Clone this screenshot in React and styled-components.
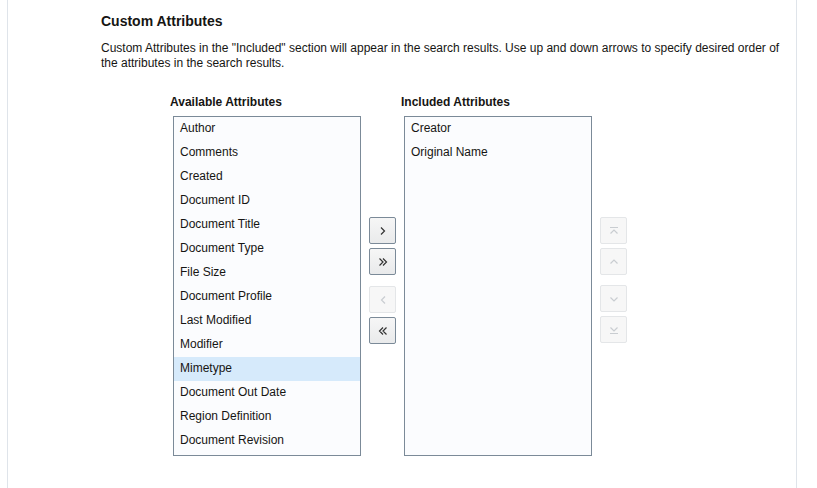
import React from "react";
import styled, { createGlobalStyle } from "styled-components";

const Global = createGlobalStyle`
  body { margin: 0; background: #fff; font-family: "Liberation Sans", Arial, sans-serif; color: #161513; }
`;

const Panel = styled.div`
  margin: 0 20px 0 7px;
  height: 488px;
  box-sizing: border-box;
  border-left: 1px solid #dfe4ea;
  border-right: 1px solid #dfe4ea;
  padding: 13px 0 0 93px;
`;

const Heading = styled.h2`
  margin: 0;
  font-size: 14px;
  font-weight: bold;
  line-height: 17px;
`;

const Desc = styled.p`
  margin: 11px 0 0;
  font-size: 12px;
  line-height: 15px;
  width: 690px;
`;

const Shuttle = styled.div`
  display: flex;
  margin: 24px 0 0 72px;
  align-items: flex-start;
`;

const Column = styled.div`
  display: flex;
  flex-direction: column;
`;

const Label = styled.div`
  font-size: 12px;
  font-weight: bold;
  height: 14px;
  margin: 0 0 7px -3px;
`;

const List = styled.div`
  width: 188px;
  height: 340px;
  box-sizing: border-box;
  border: 1px solid #7b8a98;
  background: #fbfcfe;
`;

const Item = styled.div`
  height: 24px;
  line-height: 22px;
  font-size: 12px;
  padding-left: 6px;
  background: ${(p) => (p.$sel ? "#d6eafb" : "transparent")};
`;

const Buttons = styled.div`
  display: flex;
  flex-direction: column;
  gap: 4px;
  margin: ${(p) => p.$top}px 8px 0;
`;

const Btn = styled.div`
  width: 27px;
  height: 27px;
  box-sizing: border-box;
  border: 1px solid ${(p) => (p.$off ? "#e4e6e8" : "#7b8a98")};
  border-radius: 2px;
  background: ${(p) => (p.$off ? "#f7f7f7" : "linear-gradient(#f6f6f6, #e9eaeb)")};
  display: flex;
  align-items: center;
  justify-content: center;
  color: ${(p) => (p.$off ? "#c9cdd1" : "#333")};
  margin-top: ${(p) => p.$gap || 0}px;
`;

const Icon = ({ d }) => (
  <svg width="12" height="12" viewBox="0 0 12 12" fill="none" stroke="currentColor" strokeWidth="1.2">
    <path d={d} />
  </svg>
);

const available = [
  "Author", "Comments", "Created", "Document ID", "Document Title", "Document Type",
  "File Size", "Document Profile", "Last Modified", "Modifier", "Mimetype",
  "Document Out Date", "Region Definition", "Document Revision",
];
const included = ["Creator", "Original Name"];

export default function App() {
  return (
    <>
      <Global />
      <Panel>
        <Heading>Custom Attributes</Heading>
        <Desc>
          Custom Attributes in the "Included" section will appear in the search results. Use up and down arrows to specify desired order of the attributes in the search results.
        </Desc>
        <Shuttle>
          <Column>
            <Label>Available Attributes</Label>
            <List>
              {available.map((a) => (
                <Item key={a} $sel={a === "Mimetype"}>{a}</Item>
              ))}
            </List>
          </Column>
          <Buttons $top={122}>
            <Btn><Icon d="M4 2.5l3.5 3.5L4 9.5" /></Btn>
            <Btn><Icon d="M2.5 2.5L6 6 2.5 9.5M6 2.5L9.5 6 6 9.5" /></Btn>
            <Btn $off $gap={7}><Icon d="M8 2.5L4.5 6 8 9.5" /></Btn>
            <Btn><Icon d="M9.5 2.5L6 6l3.5 3.5M6 2.5L2.5 6 6 9.5" /></Btn>
          </Buttons>
          <Column>
            <Label>Included Attributes</Label>
            <List>
              {included.map((a) => (
                <Item key={a}>{a}</Item>
              ))}
            </List>
          </Column>
          <Buttons $top={122}>
            <Btn $off><Icon d="M2 2.5h8M2.5 8.5L6 5l3.5 3.5" /></Btn>
            <Btn $off><Icon d="M2.5 7.5L6 4l3.5 3.5" /></Btn>
            <Btn $off $gap={6}><Icon d="M2.5 4.5L6 8l3.5-3.5" /></Btn>
            <Btn $off><Icon d="M2.5 3.5L6 7l3.5-3.5M2 9.5h8" /></Btn>
          </Buttons>
        </Shuttle>
      </Panel>
    </>
  );
}
